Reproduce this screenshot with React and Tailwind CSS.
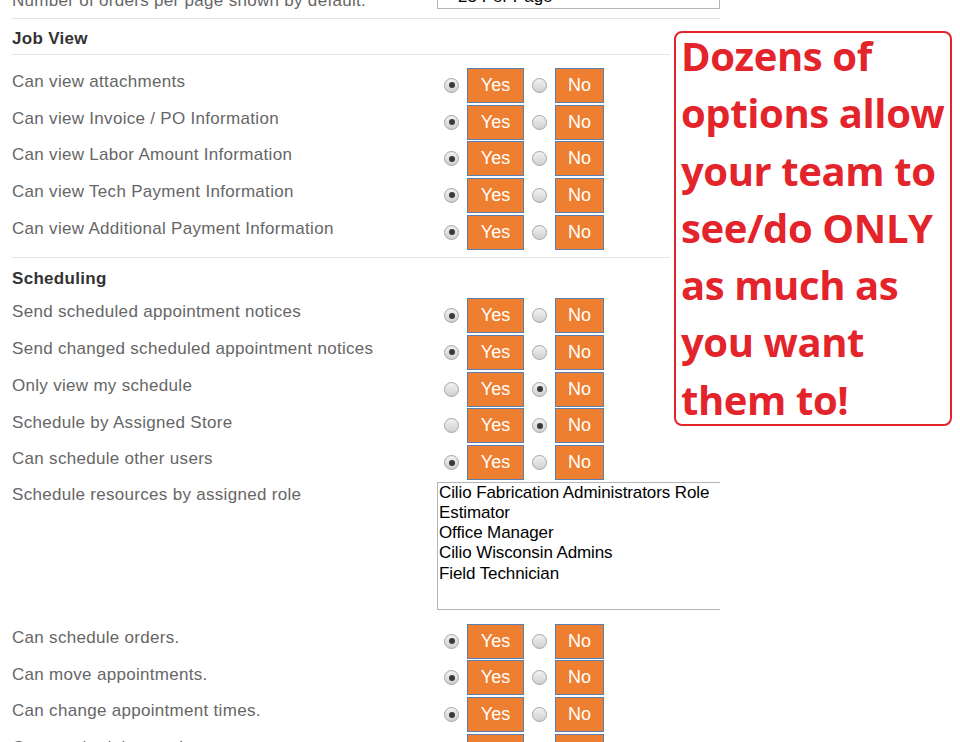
import React from 'react';

const jobView = [
  { label: 'Can view attachments', yes: true },
  { label: 'Can view Invoice / PO Information', yes: true },
  { label: 'Can view Labor Amount Information', yes: true },
  { label: 'Can view Tech Payment Information', yes: true },
  { label: 'Can view Additional Payment Information', yes: true },
];

const scheduling = [
  { label: 'Send scheduled appointment notices', yes: true },
  { label: 'Send changed scheduled appointment notices', yes: true },
  { label: 'Only view my schedule', yes: false },
  { label: 'Schedule by Assigned Store', yes: false },
  { label: 'Can schedule other users', yes: true },
];

const moreScheduling = [
  { label: 'Can schedule orders.', yes: true },
  { label: 'Can move appointments.', yes: true },
  { label: 'Can change appointment times.', yes: true },
  { label: 'Can reschedule appointments.', yes: true },
];

const roles = [
  'Cilio Fabrication Administrators Role',
  'Estimator',
  'Office Manager',
  'Cilio Wisconsin Admins',
  'Field Technician',
];

const Radio = ({ checked }) => (
  <div className="w-[15px] h-[15px] rounded-full border border-[#a5a5a5] bg-gradient-to-b from-[#f2f2f2] to-[#d0d0d0] flex items-center justify-center shrink-0">
    {checked && <div className="w-[6px] h-[6px] rounded-full bg-[#3a3a3a]" />}
  </div>
);

const OptButton = ({ children, width }) => (
  <div className={`${width} h-[35px] bg-[#ee7f30] border border-[#5a7fae] text-white text-[18px] flex items-center justify-center`}>
    {children}
  </div>
);

const Toggle = ({ yes }) => (
  <div className="flex items-center ml-[7px]">
    <Radio checked={yes} />
    <div className="ml-[8px]">
      <OptButton width="w-[57px]">Yes</OptButton>
    </div>
    <div className="ml-[8px]">
      <Radio checked={!yes} />
    </div>
    <div className="ml-[8px]">
      <OptButton width="w-[49px]">No</OptButton>
    </div>
  </div>
);

const Row = ({ label, yes }) => (
  <div className="flex h-[36.7px]">
    <div className="w-[425px] pt-[5px] leading-5 text-[17px] tracking-[0.3px] text-[#666]">{label}</div>
    <Toggle yes={yes} />
  </div>
);

export default function App() {
  return (
    <div className="relative w-[960px] h-[742px] overflow-hidden bg-white" style={{ fontFamily: '"Liberation Sans", Arial, sans-serif' }}>
      <div className="pl-[12px]">
        {/* top row, cut off */}
        <div className="flex -mt-[11px] h-[30px] w-[708px] border-b border-[#e3e3e3]">
          <div className="w-[425px] pt-[2px] leading-5 text-[17px] tracking-[0.3px] text-[#666]">Number of orders per page shown by default.</div>
          <div className="w-[283px] h-[22px] border border-[#b5b5b5] border-t-0 text-[17px] leading-5 pl-[4px] text-black -mt-[2px]">
            -- 25 Per Page -- &nbsp;&nbsp;&nbsp;&nbsp;&nbsp;
          </div>
        </div>

        {/* Job View */}
        <div className="w-[658px] h-[36px] border-b border-[#e3e3e3] flex items-center pt-[4px]">
          <span className="text-[17px] font-bold text-[#333] tracking-[0.3px]">Job View</span>
        </div>
        <div className="pt-[12px]">
          {jobView.map((r) => (
            <Row key={r.label} {...r} />
          ))}
        </div>

        <div className="w-[658px] mt-[7px] border-t border-[#e3e3e3]" />

        {/* Scheduling */}
        <div className="h-[39px] flex items-center pt-[2px]">
          <span className="text-[17px] font-bold text-[#333] tracking-[0.3px]">Scheduling</span>
        </div>
        <div>
          {scheduling.map((r) => (
            <Row key={r.label} {...r} />
          ))}
        </div>

        <div className="flex h-[142px] pt-[1px]">
          <div className="w-[425px] pt-[3px] leading-5 text-[17px] tracking-[0.3px] text-[#666]">Schedule resources by assigned role</div>
          <div className="w-[283px] h-[128px] border border-[#b5b5b5] border-r-0 pl-[1px] text-[17px] leading-[20.2px] tracking-[-0.1px] text-black">
            {roles.map((r) => (
              <div key={r}>{r}</div>
            ))}
          </div>
        </div>

        <div>
          {moreScheduling.map((r) => (
            <Row key={r.label} {...r} />
          ))}
        </div>
      </div>

      {/* callout */}
      <div className="absolute left-[674px] top-[31px] w-[278px] h-[395px] border-2 border-[#e3242b] rounded-[8px] bg-white pl-[5px]">
        <div className="-mt-[6px] text-[#e3242b] font-bold text-[40px] leading-[57.3px] tracking-[-0.4px]" style={{ fontFamily: '"Open Sans", sans-serif' }}>
          Dozens of<br />
          options allow<br />
          your team to<br />
          see/do ONLY<br />
          as much as<br />
          you want<br />
          them to!
        </div>
      </div>
    </div>
  );
}
